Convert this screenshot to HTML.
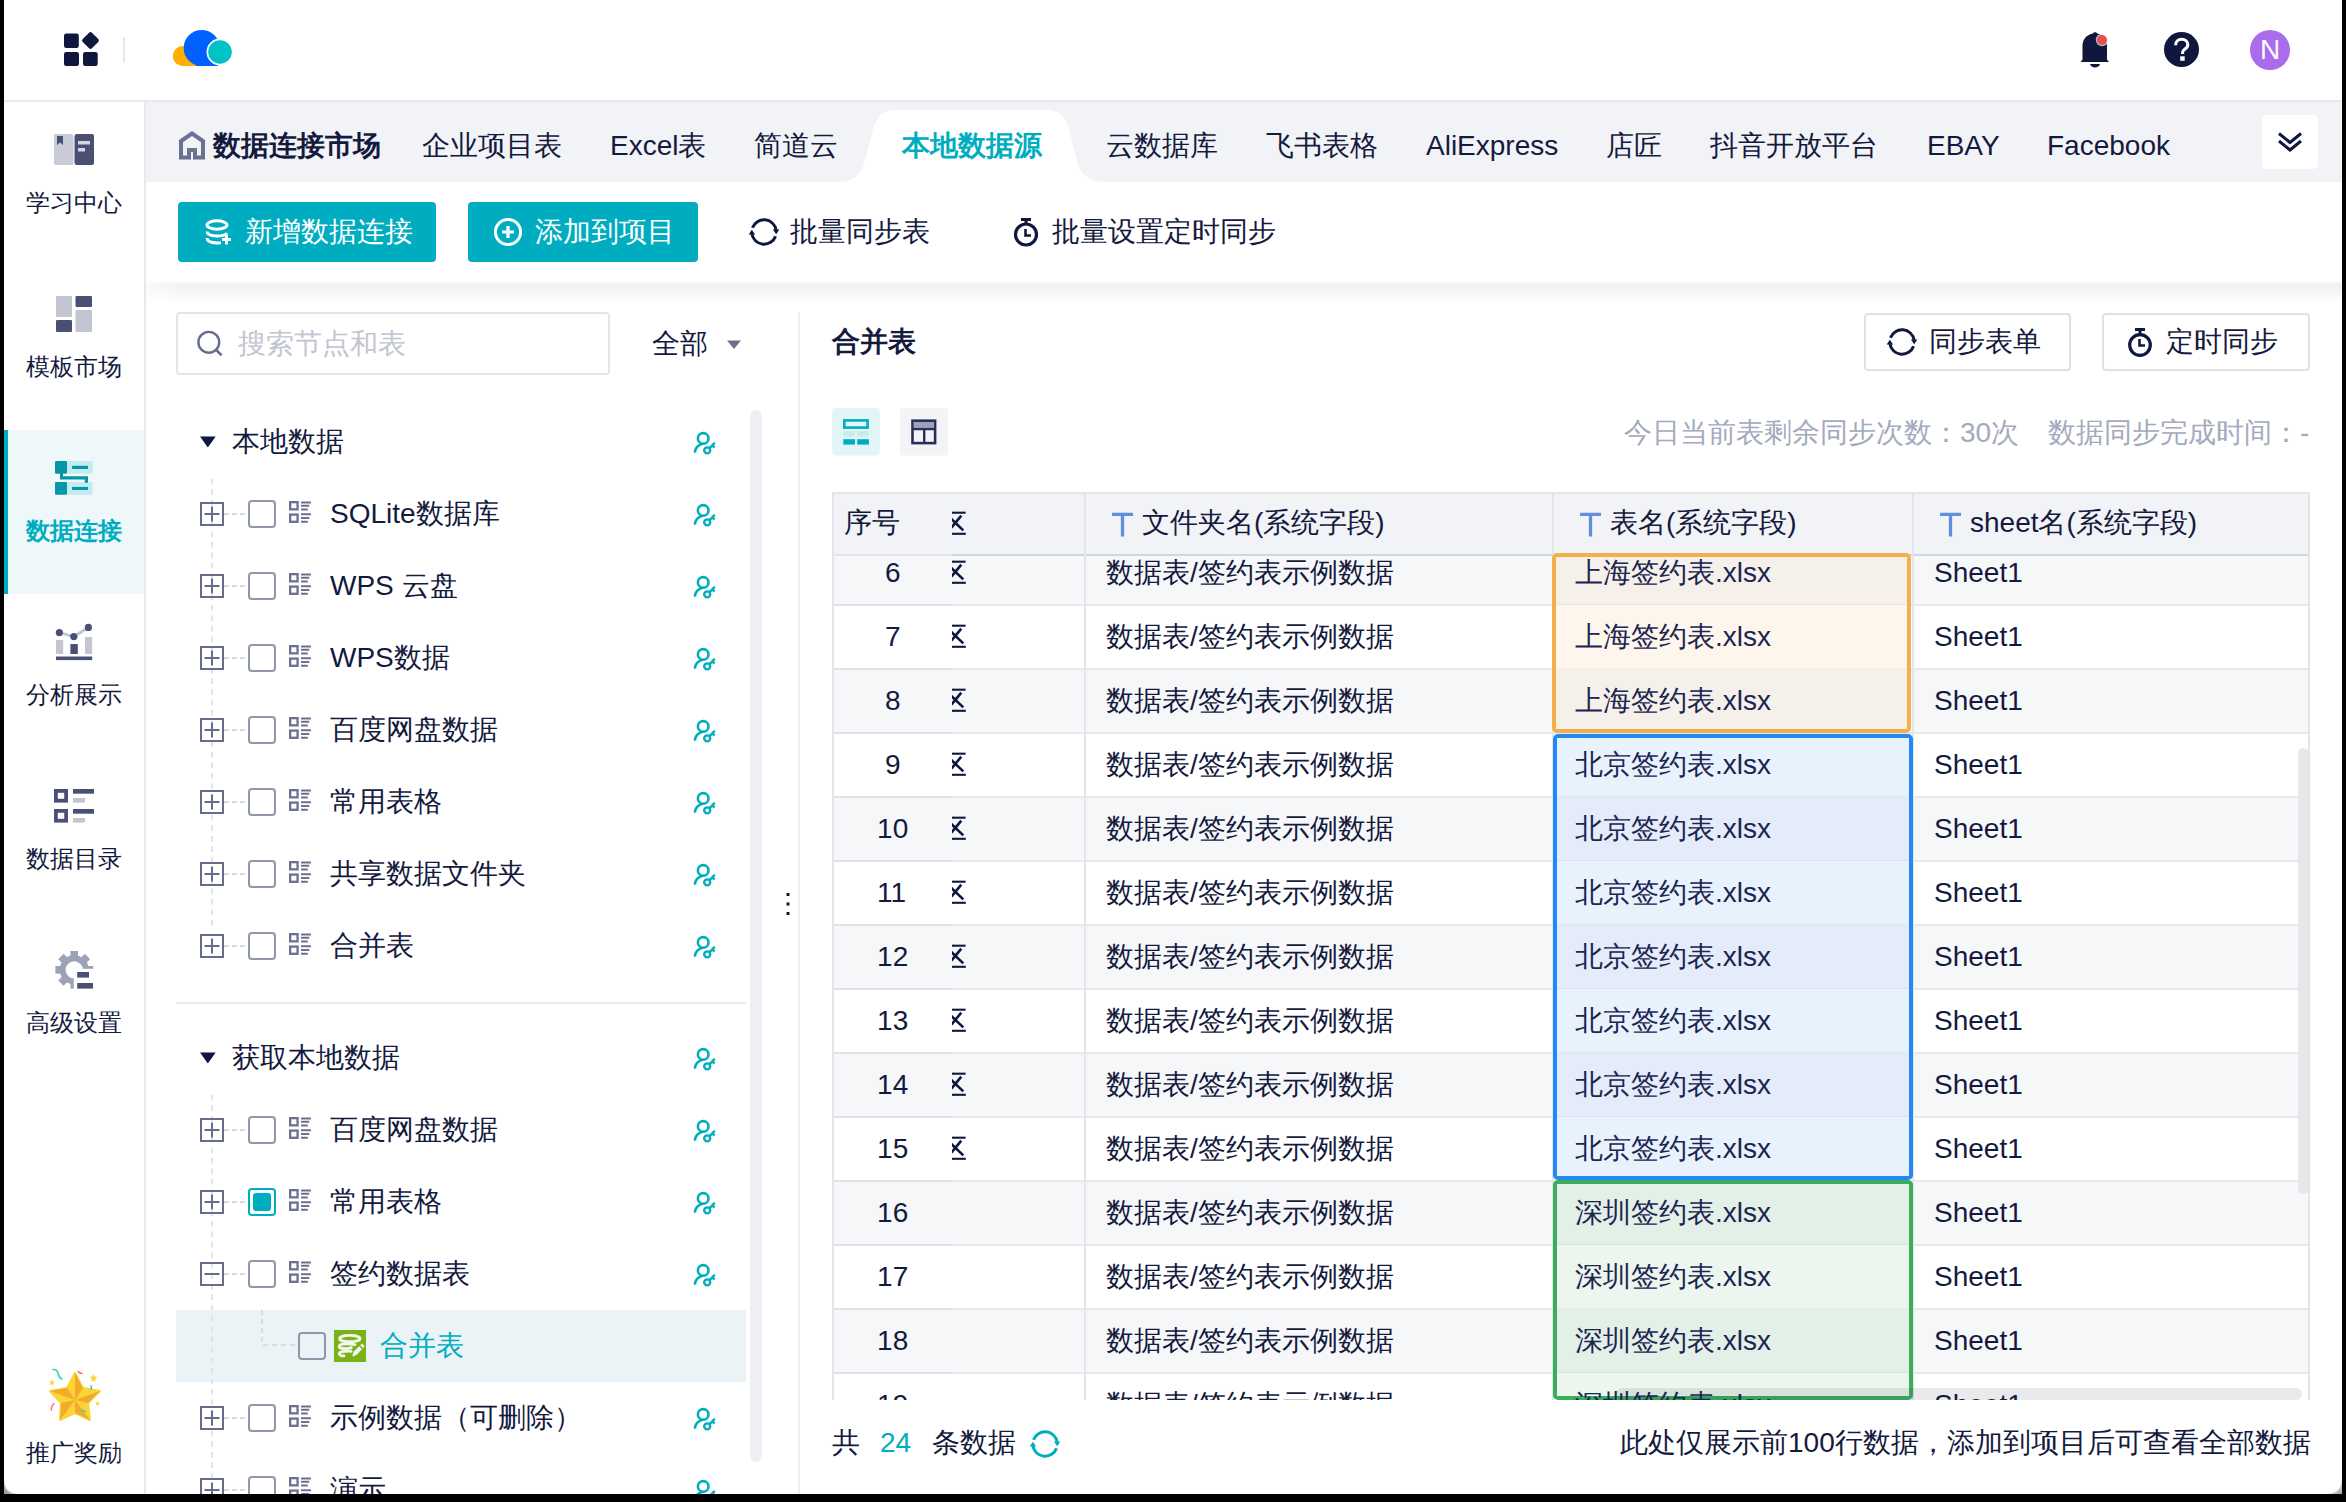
<!DOCTYPE html>
<html><head><meta charset="utf-8">
<style>
*{margin:0;padding:0;box-sizing:border-box}
html,body{width:2346px;height:1502px;overflow:hidden;background:#000}
body{font-family:"Liberation Sans",sans-serif;color:#141a3e;font-size:28px;position:relative}
.a{position:absolute}
.t{position:absolute;white-space:nowrap;line-height:40px;height:40px}
#win{position:absolute;left:0;top:0;width:2346px;height:1502px;background:#fff;overflow:hidden}
#frame{position:absolute;left:4px;top:-40px;width:2338px;height:1534px;box-shadow:0 0 0 60px #000;pointer-events:none;z-index:99}
svg{position:absolute;overflow:visible}
.btn{background:#00adc0;border-radius:4px}
.cb{position:absolute;left:248px;width:28px;height:28px;border:2px solid #8f98a8;border-radius:4px;background:#fff}
.ob{border:2px solid #dfe0e6;border-radius:4px}
.sb{left:4px;width:140px;text-align:center;font-size:24px}
</style></head>
<body>
<div id="win">
<!-- HEADER -->
<div class="a" style="left:0;top:100px;width:2346px;height:2px;background:#e7e9ef"></div>
<svg style="left:64px;top:31px" width="40" height="40" viewBox="0 0 40 40">
 <rect x="0" y="2.6" width="14.8" height="14.4" rx="2.2" fill="#10173f"/>
 <rect x="0" y="21" width="15" height="14" rx="2.2" fill="#10173f"/>
 <rect x="19" y="21" width="14.7" height="14" rx="2.2" fill="#10173f"/>
 <rect x="20" y="3" width="13" height="13" rx="2" fill="#10173f" transform="rotate(45 26.5 9.5)"/>
</svg>
<div class="a" style="left:123px;top:37px;width:2px;height:26px;background:#e8e9ef"></div>
<svg style="left:168px;top:25px" width="70" height="45" viewBox="0 0 70 45">
 <path d="M15 21 A10 10 0 0 0 15 41 L32 41 Z" fill="#ffae00"/>
 <circle cx="15" cy="31" r="10" fill="#ffae00"/>
 <path d="M15 41 L40 41 L40 21 Z" fill="#ffae00"/>
 <circle cx="33.7" cy="23" r="18" fill="#0061ff"/>
 <rect x="28" y="23" width="22" height="18" fill="#0061ff"/>
 <circle cx="52" cy="27" r="13.5" fill="#fff"/>
 <circle cx="52" cy="27" r="11.8" fill="#00c2c7"/>
</svg>
<!-- bell -->
<svg style="left:2076px;top:30px" width="40" height="40" viewBox="0 0 40 40">
 <path d="M4.5 32 L6.5 29.5 L6.5 16 C6.5 9 11 4.5 17 3.5 L17 3 L19 2 L21 3 L21 3.5 C27 4.5 31 9 31 16 L31 29.5 L33 32 Z" fill="#10173f"/>
 <path d="M14 34 L24 34 C23.5 36 21.5 37.5 19 37.5 C16.5 37.5 14.5 36 14 34Z" fill="#10173f"/>
 <circle cx="26" cy="10" r="6.2" fill="#fff" opacity=".7"/>
 <circle cx="26" cy="10" r="5" fill="#e84e4e"/>
</svg>
<!-- help -->
<svg style="left:2164px;top:32px" width="36" height="36" viewBox="0 0 36 36">
 <circle cx="17.5" cy="17.5" r="17.5" fill="#10173f"/>
 <path d="M11.6 13.3 C11.6 9.5 14.2 7.3 17.7 7.3 C21.3 7.3 23.8 9.6 23.8 12.7 C23.8 15.5 21.8 16.6 19.9 17.9 C18.9 18.6 18.6 19.3 18.6 20.5 L18.6 22" fill="none" stroke="#fff" stroke-width="3"/>
 <rect x="16.2" y="24.3" width="4.5" height="4.5" fill="#fff"/>
</svg>
<!-- avatar -->
<div class="a" style="left:2250px;top:30px;width:40px;height:40px;border-radius:50%;background:#a86cec"></div>
<div class="t" style="left:2250px;top:29.5px;width:40px;height:40px;line-height:40px;text-align:center;color:#fff;font-size:28px">N</div>

<!-- SIDEBAR -->
<div class="a" style="left:144px;top:102px;width:2px;height:1400px;background:#e8e9ef"></div>
</div>


<!-- TAB BAR -->
<div class="a" style="left:146px;top:102px;width:2196px;height:80px;background:#f2f3f7"></div>
<svg style="left:0;top:0" width="2346" height="200" viewBox="0 0 2346 200">
 <path d="M838 182 Q858 182 864 164 L874 126 Q879 110 896 110 L1046 110 Q1063 110 1068 126 L1078 164 Q1084 182 1104 182 Z" fill="#fff"/>
 <path d="M181 157.5 L181 141 L192 133.5 L203 141 L203 157.5 L195 157.5 L195 150 L189 150 L189 157.5 Z" fill="none" stroke="#6b7190" stroke-width="4" stroke-linejoin="miter"/>
</svg>
<div class="t" style="left:213px;top:126px;font-weight:bold">数据连接市场</div>
<div class="t" style="left:422px;top:126px">企业项目表</div>
<div class="t" style="left:610px;top:126px">Excel表</div>
<div class="t" style="left:754px;top:126px">简道云</div>
<div class="t" style="left:902px;top:126px;font-weight:bold;color:#00adc0">本地数据源</div>
<div class="t" style="left:1106px;top:126px">云数据库</div>
<div class="t" style="left:1266px;top:126px">飞书表格</div>
<div class="t" style="left:1426px;top:126px">AliExpress</div>
<div class="t" style="left:1606px;top:126px">店匠</div>
<div class="t" style="left:1710px;top:126px">抖音开放平台</div>
<div class="t" style="left:1927px;top:126px">EBAY</div>
<div class="t" style="left:2047px;top:126px">Facebook</div>
<div class="a" style="left:2262px;top:115px;width:56px;height:54px;background:#fff;border-radius:5px"></div>
<svg style="left:2262px;top:115px" width="56" height="54" viewBox="0 0 56 54">
 <path d="M17 18.5 L28 27.5 L39 18.5 M17 26 L28 35 L39 26" fill="none" stroke="#10173f" stroke-width="3"/>
</svg>
<!-- TOOLBAR -->
<div class="a btn" style="left:178px;top:202px;width:258px;height:60px"></div>
<div class="a btn" style="left:468px;top:202px;width:230px;height:60px"></div>
<svg style="left:0;top:0" width="2346" height="300" viewBox="0 0 2346 300">
 <!-- db plus icon -->
 <g fill="none" stroke="#fff" stroke-width="3">
  <ellipse cx="217" cy="225" rx="10" ry="4.2"/>
  <path d="M207 231.5 Q207 235.5 217 236 Q225 236 227 233"/>
  <path d="M207 238 Q207 242.5 217 243 Q219 243 221 242.8"/>
 </g>
 <path d="M222 239.5 L231 239.5 M226.5 235 L226.5 244.5" stroke="#fff" stroke-width="3"/>
 <!-- circle plus -->
 <circle cx="508" cy="232" r="12.6" fill="none" stroke="#fff" stroke-width="3"/>
 <path d="M502 232 L514 232 M508 226 L508 238" stroke="#fff" stroke-width="3.2"/>
 <!-- timer -->
 <circle cx="1026" cy="234.5" r="10.5" fill="none" stroke="#10173f" stroke-width="3.2"/>
 <path d="M1021 219.5 L1031 219.5 M1026 220 L1026 224" stroke="#10173f" stroke-width="3"/>
 <path d="M1025.5 229 L1025.5 235.5 L1031 235.5" fill="none" stroke="#10173f" stroke-width="2.6"/>
</svg>
<div class="t" style="left:245px;top:212px;color:#fff">新增数据连接</div>
<div class="t" style="left:535px;top:212px;color:#fff">添加到项目</div>
<svg style="left:749px;top:217px;color:#10173f" width="30" height="30"><use href="#sync"/></svg>
<div class="t" style="left:790px;top:212px">批量同步表</div>
<div class="t" style="left:1052px;top:212px">批量设置定时同步</div>
<!-- toolbar shadow -->
<div class="a" style="left:146px;top:282px;width:2196px;height:22px;background:linear-gradient(#f4f5f7,#eff0f3 4px,#fff 21px);-webkit-mask-image:linear-gradient(90deg,rgba(0,0,0,.3),#000 40px)"></div>
<svg width="0" height="0" style="position:absolute">
 <defs>
  <symbol id="sync" viewBox="0 0 30 30" overflow="visible">
   <path d="M3.45 10.8 A12.3 12.3 0 0 1 27.1 12.9" fill="none" stroke="currentColor" stroke-width="3"/>
   <path d="M23.9 12.4 L30.3 12.4 L27.2 17.2 Z" fill="currentColor"/>
   <path d="M26.55 19.2 A12.3 12.3 0 0 1 2.9 17.1" fill="none" stroke="currentColor" stroke-width="3"/>
   <path d="M6.1 17.6 L-0.3 17.6 L2.8 12.8 Z" fill="currentColor"/>
  </symbol>
  <symbol id="key" viewBox="0 0 24 24" overflow="visible">
   <circle cx="10.2" cy="7.4" r="5.3" fill="none" stroke="#00adc0" stroke-width="2.6"/>
   <path d="M1.8 21.6 Q2.6 14.6 9.6 12.8" fill="none" stroke="#00adc0" stroke-width="2.6"/>
   <circle cx="14.2" cy="19.4" r="3" fill="none" stroke="#00adc0" stroke-width="2.4"/>
   <path d="M16.3 17.3 L21.8 11.8 M19.4 14.4 L21.6 16.6" fill="none" stroke="#00adc0" stroke-width="2.4"/>
  </symbol>
  <symbol id="tbl" viewBox="0 0 24 24" overflow="visible">
   <rect x="1.15" y="1.15" width="7.4" height="7.2" fill="none" stroke="#6b7190" stroke-width="2.3"/>
   <rect x="1.15" y="13.6" width="7.4" height="7.2" fill="none" stroke="#6b7190" stroke-width="2.3"/>
   <path d="M12 1.4 H22 M12 4.8 H20.3 M12 8.5 H18.8 M12 13.2 H22 M12 17.1 H20.3 M12 20.7 H18.8" stroke="#6b7190" stroke-width="2"/>
  </symbol>
  <symbol id="plus" viewBox="0 0 24 24" overflow="visible">
   <rect x="1" y="1" width="22" height="22" fill="none" stroke="#666c8c" stroke-width="2"/>
   <path d="M4.5 12 H19.5 M12 4.5 V19.5" stroke="#666c8c" stroke-width="2"/>
  </symbol>
  <symbol id="minus" viewBox="0 0 24 24" overflow="visible">
   <rect x="1" y="1" width="22" height="22" fill="none" stroke="#666c8c" stroke-width="2"/>
   <path d="M4.5 12 H19.5" stroke="#666c8c" stroke-width="2"/>
  </symbol>
 </defs>
</svg>

<!-- LEFT PANEL -->
<div class="a" style="left:176px;top:312px;width:434px;height:63px;border:2px solid #e3e5eb;border-radius:4px"></div>
<svg style="left:197px;top:330px" width="30" height="30" viewBox="0 0 30 30"><circle cx="11.8" cy="12.3" r="10.4" fill="none" stroke="#666c8c" stroke-width="2.4"/><path d="M19.2 19.8 L24.6 25.4" stroke="#666c8c" stroke-width="2.6"/></svg>
<div class="t" style="left:238px;top:324px;color:#c2c5d2">搜索节点和表</div>
<div class="t" style="left:652px;top:324px">全部</div>
<svg style="left:726px;top:339px" width="16" height="12" viewBox="0 0 16 12"><path d="M1 1.5 L15 1.5 L8 10 Z" fill="#6b7190"/></svg>
<div class="a" style="left:750px;top:410px;width:12px;height:1052px;background:#eeeff2;border-radius:6px"></div>
<div class="a" style="left:798px;top:312px;width:2px;height:1190px;background:#eef0f3"></div>
<svg style="left:786px;top:893px" width="4" height="24" viewBox="0 0 4 24"><rect x="0.5" y="0" width="3" height="3" fill="#10173f"/><rect x="0.5" y="9.5" width="3" height="3" fill="#10173f"/><rect x="0.5" y="19" width="3" height="3" fill="#10173f"/></svg>
<svg style="left:200px;top:436px" width="16" height="12" viewBox="0 0 16 12"><path d="M0 0.5 L15.7 0.5 L7.85 11.5 Z" fill="#10173f"/></svg>
<div class="t" style="left:232px;top:422px">本地数据</div>
<svg style="left:693px;top:431px" width="24" height="24"><use href="#key"/></svg>
<svg style="left:211px;top:479px" width="2" height="450" viewBox="0 0 2 450"><path d="M1 0 V448" stroke="#dcdee5" stroke-width="1.6" stroke-dasharray="5.5 5"/></svg>
<svg style="left:200px;top:502px" width="24" height="24"><use href="#plus"/></svg>
<svg style="left:224px;top:513px" width="24" height="2" viewBox="0 0 24 2"><path d="M0 1 H22" stroke="#d6d9e1" stroke-width="1.8" stroke-dasharray="5 3"/></svg>
<div class="a cb" style="top:500px"></div>
<svg style="left:289px;top:501.0px" width="24" height="24"><use href="#tbl"/></svg>
<div class="t" style="left:330px;top:494px">SQLite数据库</div>
<svg style="left:693px;top:503px" width="24" height="24"><use href="#key"/></svg>
<svg style="left:200px;top:574px" width="24" height="24"><use href="#plus"/></svg>
<svg style="left:224px;top:585px" width="24" height="2" viewBox="0 0 24 2"><path d="M0 1 H22" stroke="#d6d9e1" stroke-width="1.8" stroke-dasharray="5 3"/></svg>
<div class="a cb" style="top:572px"></div>
<svg style="left:289px;top:573.0px" width="24" height="24"><use href="#tbl"/></svg>
<div class="t" style="left:330px;top:566px">WPS 云盘</div>
<svg style="left:693px;top:575px" width="24" height="24"><use href="#key"/></svg>
<svg style="left:200px;top:646px" width="24" height="24"><use href="#plus"/></svg>
<svg style="left:224px;top:657px" width="24" height="2" viewBox="0 0 24 2"><path d="M0 1 H22" stroke="#d6d9e1" stroke-width="1.8" stroke-dasharray="5 3"/></svg>
<div class="a cb" style="top:644px"></div>
<svg style="left:289px;top:645.0px" width="24" height="24"><use href="#tbl"/></svg>
<div class="t" style="left:330px;top:638px">WPS数据</div>
<svg style="left:693px;top:647px" width="24" height="24"><use href="#key"/></svg>
<svg style="left:200px;top:718px" width="24" height="24"><use href="#plus"/></svg>
<svg style="left:224px;top:729px" width="24" height="2" viewBox="0 0 24 2"><path d="M0 1 H22" stroke="#d6d9e1" stroke-width="1.8" stroke-dasharray="5 3"/></svg>
<div class="a cb" style="top:716px"></div>
<svg style="left:289px;top:717.0px" width="24" height="24"><use href="#tbl"/></svg>
<div class="t" style="left:330px;top:710px">百度网盘数据</div>
<svg style="left:693px;top:719px" width="24" height="24"><use href="#key"/></svg>
<svg style="left:200px;top:790px" width="24" height="24"><use href="#plus"/></svg>
<svg style="left:224px;top:801px" width="24" height="2" viewBox="0 0 24 2"><path d="M0 1 H22" stroke="#d6d9e1" stroke-width="1.8" stroke-dasharray="5 3"/></svg>
<div class="a cb" style="top:788px"></div>
<svg style="left:289px;top:789.0px" width="24" height="24"><use href="#tbl"/></svg>
<div class="t" style="left:330px;top:782px">常用表格</div>
<svg style="left:693px;top:791px" width="24" height="24"><use href="#key"/></svg>
<svg style="left:200px;top:862px" width="24" height="24"><use href="#plus"/></svg>
<svg style="left:224px;top:873px" width="24" height="2" viewBox="0 0 24 2"><path d="M0 1 H22" stroke="#d6d9e1" stroke-width="1.8" stroke-dasharray="5 3"/></svg>
<div class="a cb" style="top:860px"></div>
<svg style="left:289px;top:861.0px" width="24" height="24"><use href="#tbl"/></svg>
<div class="t" style="left:330px;top:854px">共享数据文件夹</div>
<svg style="left:693px;top:863px" width="24" height="24"><use href="#key"/></svg>
<svg style="left:200px;top:934px" width="24" height="24"><use href="#plus"/></svg>
<svg style="left:224px;top:945px" width="24" height="2" viewBox="0 0 24 2"><path d="M0 1 H22" stroke="#d6d9e1" stroke-width="1.8" stroke-dasharray="5 3"/></svg>
<div class="a cb" style="top:932px"></div>
<svg style="left:289px;top:933.0px" width="24" height="24"><use href="#tbl"/></svg>
<div class="t" style="left:330px;top:926px">合并表</div>
<svg style="left:693px;top:935px" width="24" height="24"><use href="#key"/></svg>
<div class="a" style="left:176px;top:1002px;width:570px;height:2px;background:#e8eaef"></div>
<svg style="left:200px;top:1052px" width="16" height="12" viewBox="0 0 16 12"><path d="M0 0.5 L15.7 0.5 L7.85 11.5 Z" fill="#10173f"/></svg>
<div class="t" style="left:232px;top:1038px">获取本地数据</div>
<svg style="left:693px;top:1047px" width="24" height="24"><use href="#key"/></svg>
<div class="a" style="left:176px;top:1310px;width:570px;height:72px;background:#ebf3f6"></div>
<svg style="left:211px;top:1095px" width="2" height="410" viewBox="0 0 2 410"><path d="M1 0 V410" stroke="#dcdee5" stroke-width="1.6" stroke-dasharray="5.5 5"/></svg>
<svg style="left:200px;top:1118px" width="24" height="24"><use href="#plus"/></svg>
<svg style="left:224px;top:1129px" width="24" height="2" viewBox="0 0 24 2"><path d="M0 1 H22" stroke="#d6d9e1" stroke-width="1.8" stroke-dasharray="5 3"/></svg>
<div class="a cb" style="top:1116px"></div>
<svg style="left:289px;top:1117.0px" width="24" height="24"><use href="#tbl"/></svg>
<div class="t" style="left:330px;top:1110px">百度网盘数据</div>
<svg style="left:693px;top:1119px" width="24" height="24"><use href="#key"/></svg>
<svg style="left:200px;top:1190px" width="24" height="24"><use href="#plus"/></svg>
<svg style="left:224px;top:1201px" width="24" height="2" viewBox="0 0 24 2"><path d="M0 1 H22" stroke="#d6d9e1" stroke-width="1.8" stroke-dasharray="5 3"/></svg>
<div class="a" style="left:248px;top:1188px;width:28px;height:28px;border:2px solid #00adc0;border-radius:4px;background:#fff"></div>
<div class="a" style="left:253px;top:1193px;width:18px;height:18px;background:#00adc0;border-radius:3px"></div>
<svg style="left:289px;top:1189.0px" width="24" height="24"><use href="#tbl"/></svg>
<div class="t" style="left:330px;top:1182px">常用表格</div>
<svg style="left:693px;top:1191px" width="24" height="24"><use href="#key"/></svg>
<svg style="left:200px;top:1262px" width="24" height="24"><use href="#minus"/></svg>
<svg style="left:224px;top:1273px" width="24" height="2" viewBox="0 0 24 2"><path d="M0 1 H22" stroke="#d6d9e1" stroke-width="1.8" stroke-dasharray="5 3"/></svg>
<div class="a cb" style="top:1260px"></div>
<svg style="left:289px;top:1261.0px" width="24" height="24"><use href="#tbl"/></svg>
<div class="t" style="left:330px;top:1254px">签约数据表</div>
<svg style="left:693px;top:1263px" width="24" height="24"><use href="#key"/></svg>
<svg style="left:200px;top:1406px" width="24" height="24"><use href="#plus"/></svg>
<svg style="left:224px;top:1417px" width="24" height="2" viewBox="0 0 24 2"><path d="M0 1 H22" stroke="#d6d9e1" stroke-width="1.8" stroke-dasharray="5 3"/></svg>
<div class="a cb" style="top:1404px"></div>
<svg style="left:289px;top:1405.0px" width="24" height="24"><use href="#tbl"/></svg>
<div class="t" style="left:330px;top:1398px">示例数据（可删除）</div>
<svg style="left:693px;top:1407px" width="24" height="24"><use href="#key"/></svg>
<svg style="left:200px;top:1478px" width="24" height="24"><use href="#plus"/></svg>
<svg style="left:224px;top:1489px" width="24" height="2" viewBox="0 0 24 2"><path d="M0 1 H22" stroke="#d6d9e1" stroke-width="1.8" stroke-dasharray="5 3"/></svg>
<div class="a cb" style="top:1476px"></div>
<svg style="left:289px;top:1477.0px" width="24" height="24"><use href="#tbl"/></svg>
<div class="t" style="left:330px;top:1470px">演示</div>
<svg style="left:693px;top:1479px" width="24" height="24"><use href="#key"/></svg>
<svg style="left:261px;top:1310px" width="40" height="40" viewBox="0 0 40 40"><path d="M1 0 V35 H37" fill="none" stroke="#d3d6de" stroke-width="1.6" stroke-dasharray="5 4"/></svg>
<div class="a cb" style="left:298px;top:1332px;background:transparent"></div>
<div class="a" style="left:334px;top:1330px;width:32px;height:32px;background:#7ab317"></div>
<svg style="left:334px;top:1330px" width="32" height="32" viewBox="0 0 32 32"><g fill="none" stroke="#f2f7f0" stroke-width="2.9" stroke-linecap="round"><ellipse cx="15.8" cy="8.6" rx="10.2" ry="3.2"/><path d="M21 14.6 C12 13.2 4.5 13.8 5.2 16.6 C5.8 19 13 19.2 17.3 17.6"/><path d="M17.2 21.2 C10 21 4.8 21.8 5.3 24 C5.7 25.6 8.4 26 9.8 25.8"/></g><path d="M18.2 26.8 L19.6 21.7 L25.2 16.3 L28.1 19.2 L22.6 24.7 Z M26.3 15.2 L28 13.5 L30.8 16.3 L29.1 18 Z" fill="#f2f7f0"/></svg>
<div class="t" style="left:380px;top:1326px;color:#00adc0">合并表</div>
<!-- RIGHT PANEL -->
<div class="t" style="left:832px;top:322px;font-weight:bold">合并表</div>
<div class="a ob" style="left:1864px;top:313px;width:207px;height:58px"></div>
<div class="a ob" style="left:2102px;top:313px;width:208px;height:58px"></div>
<svg style="left:0;top:0" width="2346" height="480" viewBox="0 0 2346 480">
 <circle cx="2140" cy="345" r="10.3" fill="none" stroke="#10173f" stroke-width="3.2"/>
 <path d="M2135 329.5 L2145 329.5 M2140 330 L2140 334" stroke="#10173f" stroke-width="3"/>
 <path d="M2139.5 339 L2139.5 345.5 L2145 345.5" fill="none" stroke="#10173f" stroke-width="2.6"/>
 <rect x="832" y="408" width="48" height="47.6" rx="4" fill="#e2f6f8"/>
 <rect x="900" y="408" width="48" height="47.6" rx="4" fill="#f3f4f7"/>
 <rect x="844.3" y="420.4" width="23.3" height="7.2" fill="none" stroke="#00adc0" stroke-width="2.6"/>
 <rect x="843.5" y="431.2" width="11.5" height="5.4" fill="#c6ecf0"/>
 <rect x="857.2" y="431.2" width="11.7" height="5.4" fill="#c6ecf0"/>
 <rect x="843.3" y="439.2" width="11.7" height="5.4" fill="#00adc0"/>
 <rect x="857.2" y="439.2" width="11.7" height="5.4" fill="#00adc0"/>
 <rect x="912.5" y="420.7" width="22.6" height="22.4" fill="none" stroke="#283058" stroke-width="2.6"/>
 <rect x="913.8" y="422" width="20" height="5.6" fill="#9ea2b6"/>
 <path d="M912.5 429 H935.1 M924.2 429 V443" stroke="#283058" stroke-width="2.4"/>
</svg>
<svg style="left:1887px;top:327px;color:#10173f" width="30" height="30"><use href="#sync"/></svg>
<div class="t" style="left:1929px;top:322px">同步表单</div>
<div class="t" style="left:2166px;top:322px">定时同步</div>
<div class="t" style="left:1624px;top:413px;color:#a4aabd">今日当前表剩余同步次数：30次</div>
<div class="t" style="left:2048px;top:413px;color:#a4aabd">数据同步完成时间：-</div>
<svg width="0" height="0" style="position:absolute"><defs><clipPath id="kclip"><rect x="0" y="-5" width="20" height="40"/></clipPath></defs></svg>
<div class="a" style="left:832px;top:492px;width:1478px;height:908px;overflow:hidden">
<div class="a" style="left:1px;top:49px;width:1476px;height:64px;background:#f6f7f9"></div>
<div class="a" style="left:1px;top:113px;width:1476px;height:64px;background:#fff"></div>
<div class="a" style="left:1px;top:177px;width:1476px;height:64px;background:#f6f7f9"></div>
<div class="a" style="left:1px;top:241px;width:1476px;height:64px;background:#fff"></div>
<div class="a" style="left:1px;top:305px;width:1476px;height:64px;background:#f6f7f9"></div>
<div class="a" style="left:1px;top:369px;width:1476px;height:64px;background:#fff"></div>
<div class="a" style="left:1px;top:433px;width:1476px;height:64px;background:#f6f7f9"></div>
<div class="a" style="left:1px;top:497px;width:1476px;height:64px;background:#fff"></div>
<div class="a" style="left:1px;top:561px;width:1476px;height:64px;background:#f6f7f9"></div>
<div class="a" style="left:1px;top:625px;width:1476px;height:64px;background:#fff"></div>
<div class="a" style="left:1px;top:689px;width:1476px;height:64px;background:#f6f7f9"></div>
<div class="a" style="left:1px;top:753px;width:1476px;height:64px;background:#fff"></div>
<div class="a" style="left:1px;top:817px;width:1476px;height:64px;background:#f6f7f9"></div>
<div class="a" style="left:1px;top:881px;width:1476px;height:64px;background:#fff"></div>
<div class="a" style="left:1px;top:112px;width:1476px;height:2px;background:#e6e8ec"></div>
<div class="a" style="left:1px;top:112px;width:119px;height:2px;background:#dcdfe6"></div>
<div class="a" style="left:1px;top:176px;width:1476px;height:2px;background:#e6e8ec"></div>
<div class="a" style="left:1px;top:176px;width:119px;height:2px;background:#dcdfe6"></div>
<div class="a" style="left:1px;top:240px;width:1476px;height:2px;background:#e6e8ec"></div>
<div class="a" style="left:1px;top:240px;width:119px;height:2px;background:#dcdfe6"></div>
<div class="a" style="left:1px;top:304px;width:1476px;height:2px;background:#e6e8ec"></div>
<div class="a" style="left:1px;top:304px;width:119px;height:2px;background:#dcdfe6"></div>
<div class="a" style="left:1px;top:368px;width:1476px;height:2px;background:#e6e8ec"></div>
<div class="a" style="left:1px;top:368px;width:119px;height:2px;background:#dcdfe6"></div>
<div class="a" style="left:1px;top:432px;width:1476px;height:2px;background:#e6e8ec"></div>
<div class="a" style="left:1px;top:432px;width:119px;height:2px;background:#dcdfe6"></div>
<div class="a" style="left:1px;top:496px;width:1476px;height:2px;background:#e6e8ec"></div>
<div class="a" style="left:1px;top:496px;width:119px;height:2px;background:#dcdfe6"></div>
<div class="a" style="left:1px;top:560px;width:1476px;height:2px;background:#e6e8ec"></div>
<div class="a" style="left:1px;top:560px;width:119px;height:2px;background:#dcdfe6"></div>
<div class="a" style="left:1px;top:624px;width:1476px;height:2px;background:#e6e8ec"></div>
<div class="a" style="left:1px;top:624px;width:119px;height:2px;background:#dcdfe6"></div>
<div class="a" style="left:1px;top:688px;width:1476px;height:2px;background:#e6e8ec"></div>
<div class="a" style="left:1px;top:688px;width:119px;height:2px;background:#dcdfe6"></div>
<div class="a" style="left:1px;top:752px;width:1476px;height:2px;background:#e6e8ec"></div>
<div class="a" style="left:1px;top:752px;width:119px;height:2px;background:#dcdfe6"></div>
<div class="a" style="left:1px;top:816px;width:1476px;height:2px;background:#e6e8ec"></div>
<div class="a" style="left:1px;top:816px;width:119px;height:2px;background:#dcdfe6"></div>
<div class="a" style="left:1px;top:880px;width:1476px;height:2px;background:#e6e8ec"></div>
<div class="a" style="left:1px;top:880px;width:119px;height:2px;background:#dcdfe6"></div>
<div class="a" style="left:1px;top:944px;width:1476px;height:2px;background:#e6e8ec"></div>
<div class="a" style="left:1px;top:944px;width:119px;height:2px;background:#dcdfe6"></div>
<div class="t" style="left:52.89999999999998px;top:61px;">6</div>
<svg style="left:120px;top:68.5px" width="16" height="26" viewBox="0 0 16 26"><path d="M0 0.7 H13.6" stroke="#10173f" stroke-width="2.1"/><path d="M0 21.8 H13.8" stroke="#10173f" stroke-width="2.1"/><path d="M9.3 3.6 L-0.6 15.6 M-1.2 6.5 L11.3 18.4" fill="none" stroke="#10173f" stroke-width="2.6" clip-path="url(#kclip)"/></svg>
<div class="t" style="left:274px;top:61px;">数据表/签约表示例数据</div>
<div class="t" style="left:1102px;top:61px;">Sheet1</div>
<div class="t" style="left:52.89999999999998px;top:125px;">7</div>
<svg style="left:120px;top:132.5px" width="16" height="26" viewBox="0 0 16 26"><path d="M0 0.7 H13.6" stroke="#10173f" stroke-width="2.1"/><path d="M0 21.8 H13.8" stroke="#10173f" stroke-width="2.1"/><path d="M9.3 3.6 L-0.6 15.6 M-1.2 6.5 L11.3 18.4" fill="none" stroke="#10173f" stroke-width="2.6" clip-path="url(#kclip)"/></svg>
<div class="t" style="left:274px;top:125px;">数据表/签约表示例数据</div>
<div class="t" style="left:1102px;top:125px;">Sheet1</div>
<div class="t" style="left:52.89999999999998px;top:189px;">8</div>
<svg style="left:120px;top:196.5px" width="16" height="26" viewBox="0 0 16 26"><path d="M0 0.7 H13.6" stroke="#10173f" stroke-width="2.1"/><path d="M0 21.8 H13.8" stroke="#10173f" stroke-width="2.1"/><path d="M9.3 3.6 L-0.6 15.6 M-1.2 6.5 L11.3 18.4" fill="none" stroke="#10173f" stroke-width="2.6" clip-path="url(#kclip)"/></svg>
<div class="t" style="left:274px;top:189px;">数据表/签约表示例数据</div>
<div class="t" style="left:1102px;top:189px;">Sheet1</div>
<div class="t" style="left:52.89999999999998px;top:253px;">9</div>
<svg style="left:120px;top:260.5px" width="16" height="26" viewBox="0 0 16 26"><path d="M0 0.7 H13.6" stroke="#10173f" stroke-width="2.1"/><path d="M0 21.8 H13.8" stroke="#10173f" stroke-width="2.1"/><path d="M9.3 3.6 L-0.6 15.6 M-1.2 6.5 L11.3 18.4" fill="none" stroke="#10173f" stroke-width="2.6" clip-path="url(#kclip)"/></svg>
<div class="t" style="left:274px;top:253px;">数据表/签约表示例数据</div>
<div class="t" style="left:1102px;top:253px;">Sheet1</div>
<div class="t" style="left:45.10000000000002px;top:317px;">10</div>
<svg style="left:120px;top:324.5px" width="16" height="26" viewBox="0 0 16 26"><path d="M0 0.7 H13.6" stroke="#10173f" stroke-width="2.1"/><path d="M0 21.8 H13.8" stroke="#10173f" stroke-width="2.1"/><path d="M9.3 3.6 L-0.6 15.6 M-1.2 6.5 L11.3 18.4" fill="none" stroke="#10173f" stroke-width="2.6" clip-path="url(#kclip)"/></svg>
<div class="t" style="left:274px;top:317px;">数据表/签约表示例数据</div>
<div class="t" style="left:1102px;top:317px;">Sheet1</div>
<div class="t" style="left:45.10000000000002px;top:381px;">11</div>
<svg style="left:120px;top:388.5px" width="16" height="26" viewBox="0 0 16 26"><path d="M0 0.7 H13.6" stroke="#10173f" stroke-width="2.1"/><path d="M0 21.8 H13.8" stroke="#10173f" stroke-width="2.1"/><path d="M9.3 3.6 L-0.6 15.6 M-1.2 6.5 L11.3 18.4" fill="none" stroke="#10173f" stroke-width="2.6" clip-path="url(#kclip)"/></svg>
<div class="t" style="left:274px;top:381px;">数据表/签约表示例数据</div>
<div class="t" style="left:1102px;top:381px;">Sheet1</div>
<div class="t" style="left:45.10000000000002px;top:445px;">12</div>
<svg style="left:120px;top:452.5px" width="16" height="26" viewBox="0 0 16 26"><path d="M0 0.7 H13.6" stroke="#10173f" stroke-width="2.1"/><path d="M0 21.8 H13.8" stroke="#10173f" stroke-width="2.1"/><path d="M9.3 3.6 L-0.6 15.6 M-1.2 6.5 L11.3 18.4" fill="none" stroke="#10173f" stroke-width="2.6" clip-path="url(#kclip)"/></svg>
<div class="t" style="left:274px;top:445px;">数据表/签约表示例数据</div>
<div class="t" style="left:1102px;top:445px;">Sheet1</div>
<div class="t" style="left:45.10000000000002px;top:509px;">13</div>
<svg style="left:120px;top:516.5px" width="16" height="26" viewBox="0 0 16 26"><path d="M0 0.7 H13.6" stroke="#10173f" stroke-width="2.1"/><path d="M0 21.8 H13.8" stroke="#10173f" stroke-width="2.1"/><path d="M9.3 3.6 L-0.6 15.6 M-1.2 6.5 L11.3 18.4" fill="none" stroke="#10173f" stroke-width="2.6" clip-path="url(#kclip)"/></svg>
<div class="t" style="left:274px;top:509px;">数据表/签约表示例数据</div>
<div class="t" style="left:1102px;top:509px;">Sheet1</div>
<div class="t" style="left:45.10000000000002px;top:573px;">14</div>
<svg style="left:120px;top:580.5px" width="16" height="26" viewBox="0 0 16 26"><path d="M0 0.7 H13.6" stroke="#10173f" stroke-width="2.1"/><path d="M0 21.8 H13.8" stroke="#10173f" stroke-width="2.1"/><path d="M9.3 3.6 L-0.6 15.6 M-1.2 6.5 L11.3 18.4" fill="none" stroke="#10173f" stroke-width="2.6" clip-path="url(#kclip)"/></svg>
<div class="t" style="left:274px;top:573px;">数据表/签约表示例数据</div>
<div class="t" style="left:1102px;top:573px;">Sheet1</div>
<div class="t" style="left:45.10000000000002px;top:637px;">15</div>
<svg style="left:120px;top:644.5px" width="16" height="26" viewBox="0 0 16 26"><path d="M0 0.7 H13.6" stroke="#10173f" stroke-width="2.1"/><path d="M0 21.8 H13.8" stroke="#10173f" stroke-width="2.1"/><path d="M9.3 3.6 L-0.6 15.6 M-1.2 6.5 L11.3 18.4" fill="none" stroke="#10173f" stroke-width="2.6" clip-path="url(#kclip)"/></svg>
<div class="t" style="left:274px;top:637px;">数据表/签约表示例数据</div>
<div class="t" style="left:1102px;top:637px;">Sheet1</div>
<div class="t" style="left:45.10000000000002px;top:701px;">16</div>
<div class="t" style="left:274px;top:701px;">数据表/签约表示例数据</div>
<div class="t" style="left:1102px;top:701px;">Sheet1</div>
<div class="t" style="left:45.10000000000002px;top:765px;">17</div>
<div class="t" style="left:274px;top:765px;">数据表/签约表示例数据</div>
<div class="t" style="left:1102px;top:765px;">Sheet1</div>
<div class="t" style="left:45.10000000000002px;top:829px;">18</div>
<div class="t" style="left:274px;top:829px;">数据表/签约表示例数据</div>
<div class="t" style="left:1102px;top:829px;">Sheet1</div>
<div class="t" style="left:45.10000000000002px;top:893px;">19</div>
<div class="t" style="left:274px;top:893px;">数据表/签约表示例数据</div>
<div class="t" style="left:1102px;top:893px;">Sheet1</div>
<div class="a" style="left:0px;top:0px;width:1478px;height:62px;background:#f2f3f7;border-top:2px solid #e3e5ea"></div>
<div class="a" style="left:1px;top:62px;width:1476px;height:2px;background:#d3d6de"></div>
<div class="a" style="left:1px;top:62px;width:119px;height:2px;background:#e3e5ea"></div>
<div class="t" style="left:12px;top:11px;">序号</div>
<svg style="left:120px;top:20px" width="16" height="26" viewBox="0 0 16 26"><path d="M0 0.7 H13.6" stroke="#10173f" stroke-width="2.1"/><path d="M0 21.8 H13.8" stroke="#10173f" stroke-width="2.1"/><path d="M9.3 3.6 L-0.6 15.6 M-1.2 6.5 L11.3 18.4" fill="none" stroke="#10173f" stroke-width="2.6" clip-path="url(#kclip)"/></svg>
<svg style="left:280px;top:20px" width="22" height="26" viewBox="0 0 22 26"><path d="M0 2.3 H21 M10.5 2 V24.5" fill="none" stroke="#5f8fdc" stroke-width="3.3"/></svg>
<svg style="left:747.5px;top:20px" width="22" height="26" viewBox="0 0 22 26"><path d="M0 2.3 H21 M10.5 2 V24.5" fill="none" stroke="#5f8fdc" stroke-width="3.3"/></svg>
<svg style="left:1108px;top:20px" width="22" height="26" viewBox="0 0 22 26"><path d="M0 2.3 H21 M10.5 2 V24.5" fill="none" stroke="#5f8fdc" stroke-width="3.3"/></svg>
<div class="t" style="left:310px;top:11px;">文件夹名(系统字段)</div>
<div class="t" style="left:778px;top:11px;">表名(系统字段)</div>
<div class="t" style="left:1138px;top:11px;">sheet名(系统字段)</div>
<div class="a" style="left:0px;top:0px;width:2px;height:908px;background:#e3e5ea"></div>
<div class="a" style="left:252px;top:0px;width:2px;height:908px;background:#e3e5ea"></div>
<div class="a" style="left:720px;top:0px;width:2px;height:908px;background:#e3e5ea"></div>
<div class="a" style="left:1080px;top:0px;width:2px;height:908px;background:#e3e5ea"></div>
<div class="a" style="left:1476px;top:0px;width:2px;height:908px;background:#e3e5ea"></div>
<div class="a" style="left:720px;top:61px;width:359px;height:180px;border:4px solid #f4ae4c;border-radius:5px;overflow:hidden">
<div class="a" style="left:0;top:-16px;width:359px;height:64px;background:#f5f0ea"></div>
<div class="a" style="left:0;top:47px;width:359px;height:2px;background:rgba(20,30,60,.05)"></div>
<div class="a" style="left:0;top:48px;width:359px;height:64px;background:#fef6ed"></div>
<div class="a" style="left:0;top:111px;width:359px;height:2px;background:rgba(20,30,60,.05)"></div>
<div class="a" style="left:0;top:112px;width:359px;height:64px;background:#f5f0ea"></div>
<div class="a" style="left:0;top:175px;width:359px;height:2px;background:rgba(20,30,60,.05)"></div>
</div>
<div class="a" style="left:721px;top:242px;width:359.5px;height:446px;border:4px solid #2589f5;border-radius:5px;overflow:hidden">
<div class="a" style="left:0;top:-5px;width:359.5px;height:64px;background:#e8f2fd"></div>
<div class="a" style="left:0;top:58px;width:359.5px;height:2px;background:rgba(20,30,60,.05)"></div>
<div class="a" style="left:0;top:59px;width:359.5px;height:64px;background:#e3ecf8"></div>
<div class="a" style="left:0;top:122px;width:359.5px;height:2px;background:rgba(20,30,60,.05)"></div>
<div class="a" style="left:0;top:123px;width:359.5px;height:64px;background:#e8f2fd"></div>
<div class="a" style="left:0;top:186px;width:359.5px;height:2px;background:rgba(20,30,60,.05)"></div>
<div class="a" style="left:0;top:187px;width:359.5px;height:64px;background:#e3ecf8"></div>
<div class="a" style="left:0;top:250px;width:359.5px;height:2px;background:rgba(20,30,60,.05)"></div>
<div class="a" style="left:0;top:251px;width:359.5px;height:64px;background:#e8f2fd"></div>
<div class="a" style="left:0;top:314px;width:359.5px;height:2px;background:rgba(20,30,60,.05)"></div>
<div class="a" style="left:0;top:315px;width:359.5px;height:64px;background:#e3ecf8"></div>
<div class="a" style="left:0;top:378px;width:359.5px;height:2px;background:rgba(20,30,60,.05)"></div>
<div class="a" style="left:0;top:379px;width:359.5px;height:64px;background:#e8f2fd"></div>
<div class="a" style="left:0;top:442px;width:359.5px;height:2px;background:rgba(20,30,60,.05)"></div>
</div>
<div class="a" style="left:721px;top:688px;width:359.5px;height:219.5px;border:4px solid #3aae5c;border-radius:5px;overflow:hidden">
<div class="a" style="left:0;top:-3px;width:359.5px;height:64px;background:#e3f0e8"></div>
<div class="a" style="left:0;top:60px;width:359.5px;height:2px;background:rgba(20,30,60,.05)"></div>
<div class="a" style="left:0;top:61px;width:359.5px;height:64px;background:#ecf6ee"></div>
<div class="a" style="left:0;top:124px;width:359.5px;height:2px;background:rgba(20,30,60,.05)"></div>
<div class="a" style="left:0;top:125px;width:359.5px;height:64px;background:#e3f0e8"></div>
<div class="a" style="left:0;top:188px;width:359.5px;height:2px;background:rgba(20,30,60,.05)"></div>
<div class="a" style="left:0;top:189px;width:359.5px;height:64px;background:#ecf6ee"></div>
<div class="a" style="left:0;top:252px;width:359.5px;height:2px;background:rgba(20,30,60,.05)"></div>
</div>
<div class="t" style="left:743px;top:61px;color:#1b2550">上海签约表.xlsx</div>
<div class="t" style="left:743px;top:125px;color:#1b2550">上海签约表.xlsx</div>
<div class="t" style="left:743px;top:189px;color:#1b2550">上海签约表.xlsx</div>
<div class="t" style="left:743px;top:253px;color:#1b2550">北京签约表.xlsx</div>
<div class="t" style="left:743px;top:317px;color:#1b2550">北京签约表.xlsx</div>
<div class="t" style="left:743px;top:381px;color:#1b2550">北京签约表.xlsx</div>
<div class="t" style="left:743px;top:445px;color:#1b2550">北京签约表.xlsx</div>
<div class="t" style="left:743px;top:509px;color:#1b2550">北京签约表.xlsx</div>
<div class="t" style="left:743px;top:573px;color:#1b2550">北京签约表.xlsx</div>
<div class="t" style="left:743px;top:637px;color:#1b2550">北京签约表.xlsx</div>
<div class="t" style="left:743px;top:701px;color:#1b2550">深圳签约表.xlsx</div>
<div class="t" style="left:743px;top:765px;color:#1b2550">深圳签约表.xlsx</div>
<div class="t" style="left:743px;top:829px;color:#1b2550">深圳签约表.xlsx</div>
<div class="t" style="left:743px;top:893px;color:#1b2550">深圳签约表.xlsx</div>
<div class="a" style="left:1466px;top:256px;width:11px;height:446px;background:#e6e7ea;border-radius:6px"></div>
<div class="a" style="left:784px;top:895.5px;width:686px;height:12px;background:rgba(40,50,70,.1);border-radius:6px"></div>
</div>
<div class="t" style="left:832px;top:1423px">共</div>
<div class="t" style="left:880px;top:1423px;color:#00adc0">24</div>
<div class="t" style="left:932px;top:1423px">条数据</div>
<svg style="left:1030px;top:1429px;color:#00adc0" width="30" height="30"><use href="#sync"/></svg>
<div class="t" style="left:1620px;top:1423px">此处仅展示前100行数据，添加到项目后可查看全部数据</div>
<!-- SIDEBAR ITEMS -->
<svg style="left:0;top:0" width="146" height="1494" viewBox="0 0 146 1494">
 <!-- book -->
 <path d="M54 134 L71 134 Q73.5 134 73.5 136.5 L73.5 165 L56 165 Q54 165 54 163 Z" fill="#c9cbd6"/>
 <path d="M74.5 136.5 Q74.5 134 77 134 L92 134 Q94 134 94 136 L94 163 Q94 165 92 165 L77 165 Q74.5 165 74.5 163 Z" fill="#4a5073"/>
 <path d="M57 136 L63 136 L63 145 L60 142.5 L57 145 Z" fill="#4a5073"/>
 <rect x="78" y="141" width="12" height="3.5" fill="#d4d6df"/>
 <rect x="78" y="148" width="7" height="3.5" fill="#d4d6df"/>
 <!-- template -->
 <rect x="56" y="296" width="16" height="21" rx="1" fill="#c3c6d2"/>
 <rect x="56" y="320" width="16" height="12" rx="1" fill="#4a5073"/>
 <rect x="75.5" y="296" width="16.5" height="11" rx="1" fill="#4a5073"/>
 <rect x="75.5" y="310" width="16.5" height="22" rx="1" fill="#c3c6d2"/>
</svg>
<!-- active item bg -->
<div class="a" style="left:4px;top:430px;width:140px;height:164px;background:#eef8fa"></div>
<div class="a" style="left:4px;top:430px;width:4px;height:164px;background:#00adc0"></div>
<svg style="left:0;top:0" width="146" height="1494" viewBox="0 0 146 1494">
 <!-- data connect -->
 <rect x="67" y="461" width="25.6" height="12.7" rx="1" fill="#c4ebf0"/>
 <rect x="67" y="482" width="25.6" height="12.8" rx="1" fill="#c4ebf0"/>
 <rect x="55" y="461" width="12" height="12.7" rx="1" fill="#0497a8"/>
 <rect x="55" y="482" width="12" height="12.8" rx="1" fill="#0497a8"/>
 <rect x="72.1" y="465.8" width="15.9" height="3.2" fill="#0497a8"/>
 <rect x="72.1" y="486.9" width="15.9" height="3.1" fill="#0497a8"/>
 <path d="M60 473 L63 473 L63 476.3 L88 476.3 L88 482.7 L84.8 482.7 L84.8 479.4 L60 479.4 Z" fill="#0497a8"/>
 <!-- analysis -->
 <path d="M59.4 632.6 L73.8 636.6 L88.4 627.4" fill="none" stroke="#c3c6d2" stroke-width="3"/>
 <circle cx="59.4" cy="632.6" r="3.6" fill="#4a5073"/>
 <circle cx="73.8" cy="636.6" r="3.6" fill="#4a5073"/>
 <circle cx="88.4" cy="627.4" r="3.6" fill="#4a5073"/>
 <rect x="56" y="640" width="7.2" height="14" fill="#c3c6d2"/>
 <rect x="70.4" y="644" width="7.4" height="10" fill="#4a5073"/>
 <rect x="85" y="637" width="7.2" height="17" fill="#c3c6d2"/>
 <rect x="56" y="656.5" width="36.2" height="3.6" fill="#4a5073"/>
 <!-- catalog -->
 <rect x="55.9" y="790.9" width="10.2" height="9.8" fill="none" stroke="#4a5073" stroke-width="3.8"/>
 <rect x="55.9" y="810.9" width="10.2" height="9.8" fill="none" stroke="#4a5073" stroke-width="3.8"/>
 <rect x="73" y="789" width="21" height="4.7" fill="#4a5073"/>
 <rect x="73" y="809" width="21" height="4.7" fill="#4a5073"/>
 <rect x="73" y="798" width="12" height="4.6" fill="#c3c6d2"/>
 <rect x="73" y="818" width="12" height="4.6" fill="#c3c6d2"/>
 <!-- gear -->
 <g fill="#9ea2b6">
  <circle cx="74.2" cy="969.8" r="14.5"/>
  <rect x="70.4" y="951" width="7.6" height="8" transform="rotate(0 74.2 969.8)"/>
  <rect x="70.4" y="951" width="7.6" height="8" transform="rotate(45 74.2 969.8)"/>
  <rect x="70.4" y="951" width="7.6" height="8" transform="rotate(90 74.2 969.8)"/>
  <rect x="70.4" y="951" width="7.6" height="8" transform="rotate(135 74.2 969.8)"/>
  <rect x="70.4" y="951" width="7.6" height="8" transform="rotate(180 74.2 969.8)"/>
  <rect x="70.4" y="951" width="7.6" height="8" transform="rotate(225 74.2 969.8)"/>
  <rect x="70.4" y="951" width="7.6" height="8" transform="rotate(270 74.2 969.8)"/>
  <rect x="70.4" y="951" width="7.6" height="8" transform="rotate(315 74.2 969.8)"/>
 </g>
 <rect x="82" y="966" width="11.2" height="2.8" fill="#9ea2b6"/>
 <circle cx="74.2" cy="969.8" r="8.6" fill="#fff"/>
 <rect x="73.8" y="968.8" width="22" height="24" fill="#fff"/>
 <rect x="77.2" y="972" width="11.8" height="5.6" fill="#4a5073"/>
 <rect x="77.2" y="983" width="15.8" height="5.6" fill="#4a5073"/>
 <!-- star -->
 <path d="M75 1373 L83 1388 L100 1391 L88 1403 L90 1420 L75 1413 L60 1420 L61 1403 L50 1391 L67 1388 Z" fill="#fcd535" stroke="#fcd535" stroke-width="2" stroke-linejoin="round"/>
 <path d="M75 1373 L75 1400 L83 1388 Z M100 1391 L75 1400 L88 1403 Z M90 1420 L75 1400 L75 1413 Z M60 1420 L75 1400 L61 1403 Z M50 1391 L75 1400 L67 1388 Z" fill="#f3aa2e"/>
 <path d="M53 1369.5 Q57 1369 58 1373 Q59 1378 62 1379" fill="none" stroke="#3ed6a0" stroke-width="1.6" stroke-linecap="round"/>
 <path d="M78 1371.5 Q80 1373.5 82 1373.5" fill="none" stroke="#ff6a3d" stroke-width="1.4" stroke-linecap="round"/>
 <path d="M91 1389 Q92 1387 91 1386" fill="none" stroke="#1cb0f6" stroke-width="1.4" stroke-linecap="round"/>
 <path d="M54 1403.5 Q51 1406 51.5 1410" fill="none" stroke="#ff6b81" stroke-width="1.5" stroke-linecap="round"/>
 <path d="M82 1410 Q84 1412 85.5 1411" fill="none" stroke="#3ed6a0" stroke-width="1.5" stroke-linecap="round"/>
 <path d="M93.5 1374 L94.6 1376.6 L97.4 1377 L95.3 1379 L95.8 1381.8 L93.5 1380.4 L91.2 1381.8 L91.7 1379 L89.6 1377 L92.4 1376.6 Z" fill="#fcd535"/>
 <path d="M52 1379.5 L52.9 1381.5 L55 1381.8 L53.4 1383.2 L53.8 1385.3 L52 1384.3 L50.2 1385.3 L50.6 1383.2 L49 1381.8 L51.1 1381.5 Z" fill="#fcd535"/>
 <path d="M97.5 1401 L98.2 1402.6 L99.9 1402.8 L98.6 1404 L99 1405.6 L97.5 1404.8 L96 1405.6 L96.4 1404 L95.1 1402.8 L96.8 1402.6 Z" fill="#fcd535"/>
</svg>
<div class="t sb" style="top:183px">学习中心</div>
<div class="t sb" style="top:347px">模板市场</div>
<div class="t sb" style="top:511px;color:#00adc0;font-weight:bold">数据连接</div>
<div class="t sb" style="top:675px">分析展示</div>
<div class="t sb" style="top:839px">数据目录</div>
<div class="t sb" style="top:1003px">高级设置</div>
<div class="t sb" style="top:1433px">推广奖励</div>
<svg style="left:4px;top:1478px;z-index:98" width="16" height="16" viewBox="0 0 16 16"><path d="M0 0 Q0 16 16 16 L0 16 Z" fill="#c5c8ce"/><path d="M0 8 Q2 14 8 16 L0 16 Z" fill="#9aa0aa"/></svg>
<svg style="left:2326px;top:1478px;z-index:98" width="16" height="16" viewBox="0 0 16 16"><path d="M16 0 Q16 16 0 16 L16 16 Z" fill="#c5c8ce"/><path d="M16 8 Q14 14 8 16 L16 16 Z" fill="#b0b4bb"/></svg>
<div id="frame"></div>
</body></html>
